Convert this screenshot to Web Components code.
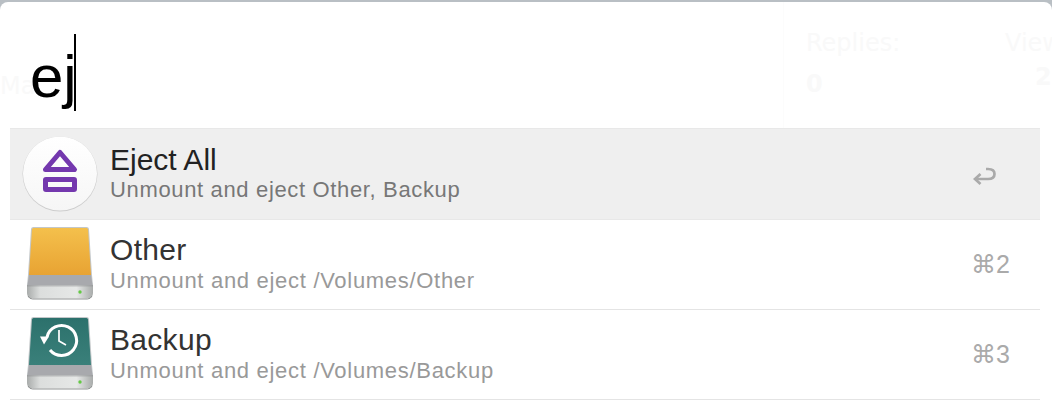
<!DOCTYPE html>
<html>
<head>
<meta charset="utf-8">
<title>Alfred eject</title>
<style>
  html { background: #b9bfc4; }
  body { margin: 0; width: 1052px; height: 420px; overflow: hidden; font-family: "Liberation Sans", Arial, sans-serif; }
</style>
</head>
<body>
<template id="eject-tpl">
  <style>
    :host { display: block; width: 76px; height: 76px; }
    svg { display: block; }
  </style>
  <svg width="76" height="76" viewBox="0 0 76 76">
    <defs>
      <linearGradient id="disc" x1="0" y1="0" x2="0" y2="1">
        <stop offset="0" stop-color="#ffffff"/>
        <stop offset="1" stop-color="#f6f6f6"/>
      </linearGradient>
    </defs>
    <circle cx="38" cy="38" r="37.5" fill="#cdcdcd"/>
    <circle cx="38" cy="37.5" r="37" fill="url(#disc)"/>
    <path d="M38 16.500 L52.500 33.500 H23.500 Z" fill="none" stroke="#7438ae" stroke-width="5" stroke-linejoin="round"/>
    <rect x="23.500" y="43.500" width="29" height="10" rx="0.5" fill="none" stroke="#7438ae" stroke-width="5" stroke-linejoin="round"/>
  </svg>
</template>

<template id="drive-tpl">
  <style>
    :host { display: block; width: 68px; height: 74px; margin-top: -1px; }
    svg { display: block; }
  </style>
  <svg width="68" height="74" viewBox="0 0 68 74">
    <defs>
      <linearGradient id="shine" x1="0" y1="0" x2="1" y2="0">
        <stop offset="0" stop-color="#a9acab"/>
        <stop offset="0.2" stop-color="#dcdedd"/>
        <stop offset="0.75" stop-color="#e6e8e7"/>
        <stop offset="1" stop-color="#a9acab"/>
      </linearGradient>
      <linearGradient id="orange" x1="0" y1="0" x2="0" y2="1">
        <stop offset="0" stop-color="#f4c04c"/>
        <stop offset="1" stop-color="#e8a333"/>
      </linearGradient>
      <linearGradient id="teal" x1="0" y1="0" x2="0" y2="1">
        <stop offset="0" stop-color="#2c716c"/>
        <stop offset="1" stop-color="#3a807a"/>
      </linearGradient>
    </defs>
    <path d="M5 2 Q5.200 0 7.500 0 H60.500 Q62.800 0 63 2 L66 48 L67 58 H1 L2 48 Z" fill="#c3c7c9"/>
    <path class="face" d="M6 2.500 Q6.100 1 7.500 1 H60.500 Q61.900 1 62 2.500 L65 48 H3 Z" fill="url(#orange)"/>
    <path d="M3 48 H65 L66.500 58 H1.500 Z" fill="#a8a9ad"/>
    <path d="M1 58 H67 V66 Q67 71.500 61.500 71.500 H6.500 Q1 71.500 1 66 Z" fill="url(#shine)"/>
    <path d="M1 58 H67 V59.500 H1 Z" fill="#8f9294" opacity="0.5"/>
    <path d="M2 69 Q3.500 72 6.500 72 H61.500 Q64.500 72 66 69" fill="none" stroke="#909393" stroke-width="1"/>
    <circle cx="54" cy="65" r="1.700" fill="#63c944"/>
    <g class="clock" fill="none" stroke="#fff" display="none">
      <path d="M21 20 A15 15 0 1 1 24 33" stroke-width="3"/>
      <path d="M14 19.500 H23 L18 27.500 Z" fill="#fff" stroke="none"/>
      <path d="M33 13 V24 L40 28" stroke-width="1.700"/>
    </g>
  </svg>
</template>

<template id="ghost-tpl">
  <style>
    :host { display: block; position: absolute; left: var(--x); top: var(--y); color: #f9f9f9; font: var(--weight, 400) 24px "DejaVu Sans", sans-serif; white-space: nowrap; }
  </style>
  <slot></slot>
</template>

<template id="search-tpl">
  <style>
    :host { display: flex; align-items: flex-start; height: 126px; box-sizing: border-box; padding: 32px 0 0 30px; position: relative; color: #000; }
    .text { font: 60px/1 "Liberation Sans", Arial, sans-serif; margin-top: 13px; }
    .caret { width: 2px; height: 77px; background: #000; margin-left: -3px; }
  </style>
  <span class="text"><slot></slot></span><span class="caret"></span>
</template>

<template id="row-tpl">
  <style>
    :host { display: flex; align-items: center; height: 90px; box-sizing: border-box; border-bottom: 1px solid #e4e4e4; color: #333; }
    :host([selected]) { background: #efefef; color: #222; height: 92px; border-top: 1px solid #e8e8e8; border-bottom-color: #e8e8e8; }
    .icon { flex: none; width: 100px; display: flex; justify-content: center; }
    .main { flex: 1; min-width: 0; margin-top: -3px; }
    .title { font-size: 30px; line-height: 34px; margin-bottom: 1px; letter-spacing: 0.3px; }
    .sub { font-size: 22px; line-height: 26px; color: #999; letter-spacing: 0.7px; }
    :host([selected]) .main { margin-top: -2px; }
    :host([selected]) .title { margin-bottom: 0; letter-spacing: 0; }
    :host([selected]) .sub { color: #777; letter-spacing: 0.65px; }
    .key { flex: none; margin-right: 30px; color: #aaa; font-size: 25px; display: flex; align-items: center; }
  </style>
  <div class="icon"><slot name="icon"></slot></div>
  <div class="main">
    <div class="title"><slot name="title"></slot></div>
    <div class="sub"><slot name="sub"></slot></div>
  </div>
  <div class="key"><slot name="key"></slot></div>
</template>

<template id="window-tpl">
  <style>
    :host { display: block; height: 418px; margin-top: 2px; background: #fff; border-radius: 8px 8px 0 0; position: relative; overflow: hidden; }
    .list { padding: 0 12px 0 10px; }
    .rule { position: absolute; left: 783px; top: 0; width: 1px; height: 126px; background: #fcfcfc; }
  </style>
  <div class="rule"></div>
  <slot name="ghost"></slot>
  <slot name="search"></slot>
  <div class="list"><slot></slot></div>
</template>

<ab-window>
  <ab-ghost slot="ghost" style="--x:0px;--y:70px">Ma</ab-ghost>
  <ab-ghost slot="ghost" style="--x:806px;--y:27px">Replies:</ab-ghost>
  <ab-ghost slot="ghost" style="--x:806px;--y:68px;--weight:700">0</ab-ghost>
  <ab-ghost slot="ghost" style="--x:1005px;--y:27px">View</ab-ghost>
  <ab-ghost slot="ghost" style="--x:1035px;--y:61px;--weight:700">2</ab-ghost>
  <ab-search slot="search">ej</ab-search>
  <ab-row selected>
    <ab-eject slot="icon"></ab-eject>
    <span slot="title">Eject All</span>
    <span slot="sub">Unmount and eject Other, Backup</span>
    <svg slot="key" style="margin:3px 13px 0 0" width="24" height="18" viewBox="0 0 24 18" fill="none" stroke="#aaa" stroke-width="2.700"><path d="M13 2 H15 Q21.500 2 21.500 7 Q21.500 12 15 12 H2"/><path d="M7.500 7 L2 12 L7.500 17"/></svg>
  </ab-row>
  <ab-row>
    <ab-drive slot="icon"></ab-drive>
    <span slot="title">Other</span>
    <span slot="sub">Unmount and eject /Volumes/Other</span>
    <span slot="key">⌘2</span>
  </ab-row>
  <ab-row>
    <ab-drive slot="icon" kind="backup"></ab-drive>
    <span slot="title">Backup</span>
    <span slot="sub">Unmount and eject /Volumes/Backup</span>
    <span slot="key">⌘3</span>
  </ab-row>
</ab-window>

<script>
  // every element just clones its template into an open shadow root
  function fromTemplate(id) {
    return class extends HTMLElement {
      constructor() {
        super();
        this.attachShadow({ mode: 'open' });
        this.shadowRoot.appendChild(document.getElementById(id).content.cloneNode(true));
      }
    };
  }

  class Drive extends fromTemplate('drive-tpl') {
    connectedCallback() {
      if (this.getAttribute('kind') === 'backup') {
        this.shadowRoot.querySelector('.face').setAttribute('fill', 'url(#teal)');
        this.shadowRoot.querySelector('.clock').removeAttribute('display');
      }
    }
  }

  customElements.define('ab-eject', fromTemplate('eject-tpl'));
  customElements.define('ab-drive', Drive);
  customElements.define('ab-ghost', fromTemplate('ghost-tpl'));
  customElements.define('ab-search', fromTemplate('search-tpl'));
  customElements.define('ab-row', fromTemplate('row-tpl'));
  customElements.define('ab-window', fromTemplate('window-tpl'));
</script>
</body>
</html>
